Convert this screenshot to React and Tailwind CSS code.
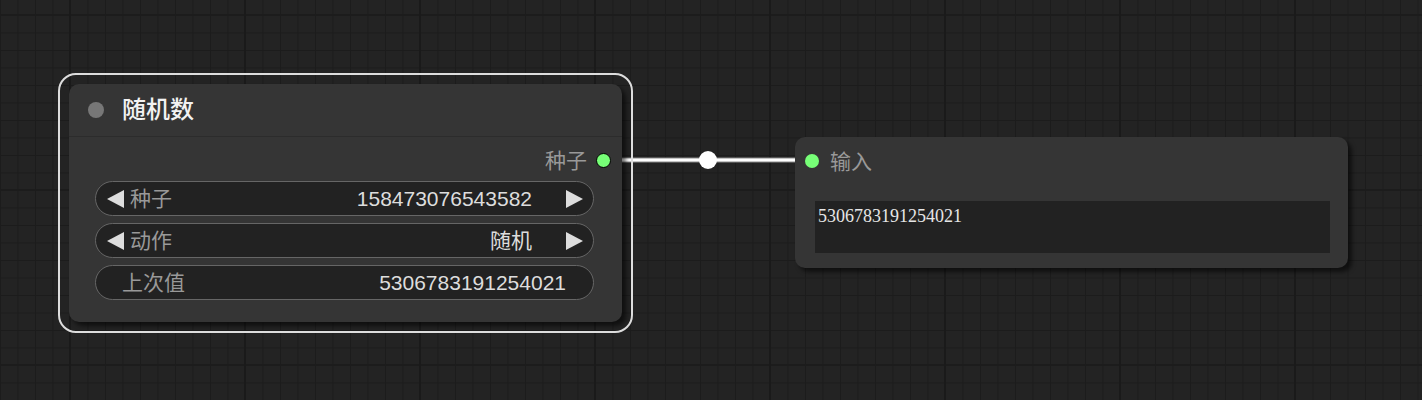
import React from 'react';

const font = { fontFamily: '"Liberation Sans", "Noto Sans CJK SC", sans-serif' };

const Arrow = ({ dir }) => (
  <svg width="17" height="18" viewBox="0 0 17 18" className="shrink-0">
    {dir === 'left' ? (
      <polygon points="17,0 17,18 0,9" fill="#dddddd" />
    ) : (
      <polygon points="0,0 0,18 17,9" fill="#dddddd" />
    )}
  </svg>
);

const Widget = ({ label, value, arrows = true }) => (
  <div className="h-[35px] rounded-full bg-[#222222] border border-[#666666] flex items-center text-[21px] leading-none">
    {arrows ? (
      <>
        <div className="pl-[11px]"><Arrow dir="left" /></div>
        <span className="ml-[6px] text-[#999999]">{label}</span>
        <span className="ml-auto text-[#dddddd]">{value}</span>
        <div className="ml-[34px] pr-[10px]"><Arrow dir="right" /></div>
      </>
    ) : (
      <>
        <span className="ml-[26px] text-[#999999]">{label}</span>
        <span className="ml-auto mr-[27px] text-[#dddddd]">{value}</span>
      </>
    )}
  </div>
);

export default function App() {
  return (
    <div
      className="relative w-[1422px] h-[400px] overflow-hidden bg-[#232323] [background-image:linear-gradient(90deg,#1a1a1a_2px,transparent_2px),linear-gradient(#1c1c1c_2px,transparent_2px),linear-gradient(90deg,#1c1c1c_1px,transparent_1px),linear-gradient(#1c1c1c_1px,transparent_1px)] [background-size:175px_175px,175px_175px,17.5px_17.5px,17.5px_17.5px] [background-position:69px_0,0_189px,0_0,0_15px]"
      style={font}
    >
      {/* link */}
      <svg className="absolute left-0 top-0" width="1422" height="400">
        <line x1="618" y1="160" x2="800" y2="160" stroke="#8a8a8a" strokeWidth="5" />
        <line x1="618" y1="160" x2="800" y2="160" stroke="#ffffff" strokeWidth="3" />
        <circle cx="708" cy="160" r="9" fill="#ffffff" />
      </svg>

      {/* selection outline */}
      <div className="absolute left-[58px] top-[73px] w-[575px] h-[260px] rounded-[18px] border-2 border-[#dddddd]" />

      {/* node 1 */}
      <div className="absolute left-[69px] top-[84px] w-[553px] h-[238px] rounded-[10px] bg-[#353535] shadow-[4px_4px_4px_rgba(0,0,0,0.55)] flex flex-col">
        <div className="h-[53px] shrink-0 flex items-center border-b border-[#2c2c2c] rounded-t-[10px]">
          <div className="ml-[19px] w-4 h-4 rounded-full bg-[#777777]" />
          <span className="ml-[18px] text-[24px] font-medium text-[#f2f2f2] leading-none">随机数</span>
        </div>
        <div className="flex items-center justify-end h-[44px] pt-[2px] pr-[11px]">
          <span className="text-[21px] text-[#999999] leading-none">种子</span>
          <div className="ml-[9px] w-[15px] h-[15px] rounded-full bg-[#77ff77] border-[1.5px] border-black" />
        </div>
        <div className="flex flex-col gap-[7px] pl-[26px] pr-[28px]">
          <Widget label="种子" value="158473076543582" />
          <Widget label="动作" value="随机" />
          <Widget label="上次值" value="5306783191254021" arrows={false} />
        </div>
      </div>

      {/* node 2 */}
      <div className="absolute left-[795px] top-[137px] w-[553px] h-[131px] rounded-[10px] bg-[#353535] shadow-[4px_4px_4px_rgba(0,0,0,0.55)] flex flex-col">
        <div className="flex items-center h-[48px]">
          <div className="ml-[10px] w-[14px] h-[14px] rounded-full bg-[#77ff77]" />
          <span className="ml-[11px] text-[21px] text-[#999999] leading-none">输入</span>
        </div>
        <div className="mt-[16px] ml-[20px] mr-[18px] h-[52px] bg-[#222222] px-[3px] pt-[4px]">
          <span
            className="text-[18px] text-[#e6e6e6] leading-none"
            style={{ fontFamily: '"Liberation Serif", "Noto Sans CJK SC", serif' }}
          >
            5306783191254021
          </span>
        </div>
      </div>
    </div>
  );
}
